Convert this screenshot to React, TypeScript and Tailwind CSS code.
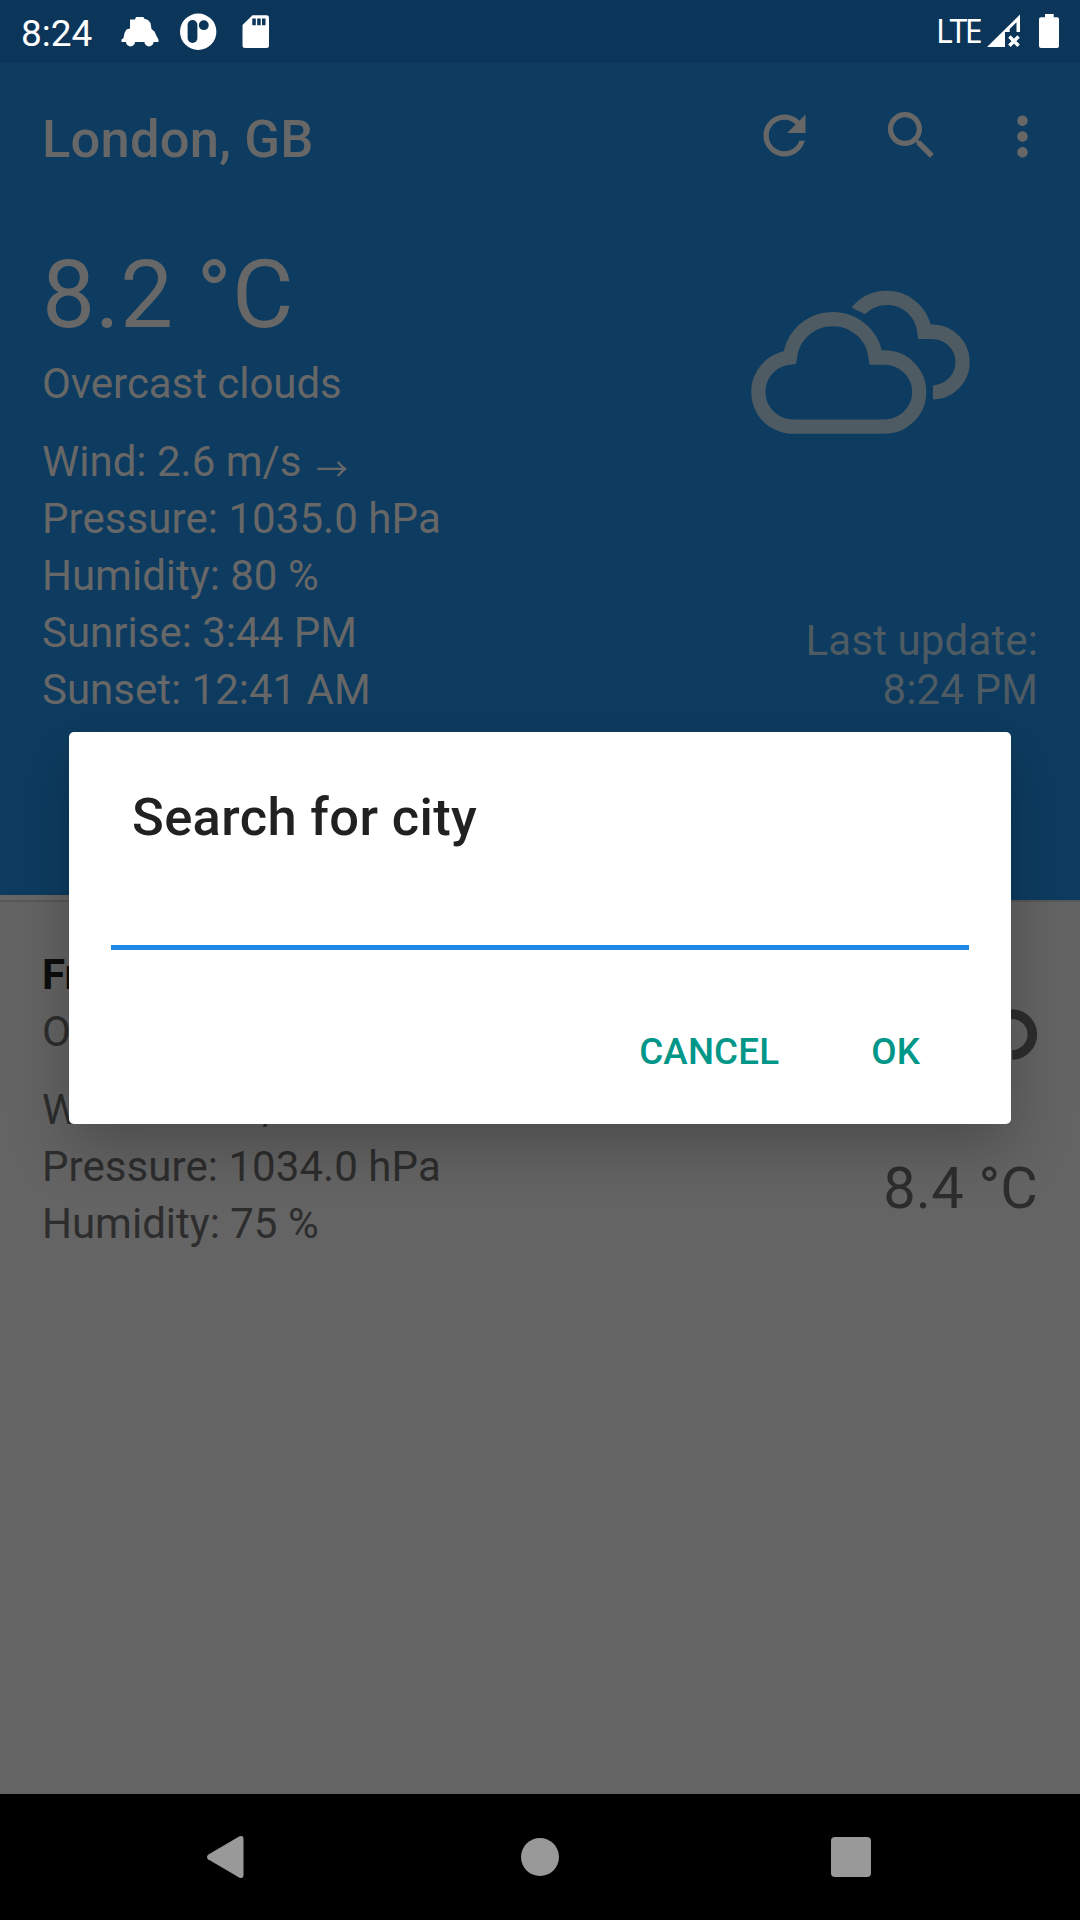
import { WiCloudy } from "react-icons/wi";

function StatusBar() {
  return (
    <div className="flex h-[63px] items-start justify-between bg-[#0c355a] text-white">
      <div className="flex">
        <span className="ml-[21px] mt-[12px] w-[100px] text-[37px] leading-[43px]">8:24</span>
        <svg width="40" height="32" viewBox="121 16 40 32" className="mt-4" fill="currentColor">
          <path d="M136 17L143.500 17L144 18.500L148 20L150.500 23L151.500 29L154.500 31.500L156.500 36L158.500 39.500L158.500 42L121.500 42L121.500 39.500L123.500 38L124.500 33L126.500 29.500L130 28.500L130 19.500L135 19.500Z" />
          <circle cx="130.5" cy="41.8" r="4.6" />
          <circle cx="149" cy="41.8" r="4.6" />
        </svg>
        <svg width="38" height="38" viewBox="179 13 38 38" className="ml-[18px] mt-[13px]">
          <circle cx="198.2" cy="31.7" r="18.2" fill="currentColor" />
          <rect x="187.6" y="20" width="9.8" height="23" rx="4.9" fill="#0c355a" />
          <circle cx="203.8" cy="25.2" r="4.9" fill="#0c355a" />
        </svg>
        <svg width="28" height="34" viewBox="242.5 15 28 34" className="ml-[25px] mt-[15px]">
          <path
            d="M253 15.3h14a2.5 2.5 0 0 1 2.5 2.5v27.700a2.500 2.500 0 0 1-2.500 2.500h-21.500a2.500 2.500 0 0 1-2.500-2.500V25z"
            fill="currentColor"
          />
          <path d="M252.800 18.500h3.500v6.800h-3.500zM257.700 18.500h3.500v6.800h-3.500zM262.500 18.500h3.500v6.800h-3.500z" fill="#0c355a" />
        </svg>
      </div>
      <div className="flex">
        <span className="mt-[12px] w-[51px] font-['Noto_Sans'] text-[32px] leading-[37px] tracking-[-2.6px]">LTE</span>
        <svg width="34" height="34" viewBox="987 14 34 34" className="mt-[14px]">
          <path d="M987 47L1020 14.500V32h-3.500V22.300L1009.700 29v3h-4.700v15z" fill="currentColor" />
          <path d="M1009.400 36.500l9.200 9.200M1018.600 36.500l-9.200 9.200" stroke="currentColor" strokeWidth="3.500" />
        </svg>
        <svg width="20" height="34" viewBox="1039 14 20 34" className="ml-[18px] mr-[21px] mt-[14px]" fill="currentColor">
          <path d="M1045 14h8.700v3.300h3.300a2 2 0 0 1 2 2V46a2 2 0 0 1-2 2h-16a2 2 0 0 1-2-2V19.300a2 2 0 0 1 2-2h4z" />
        </svg>
      </div>
    </div>
  );
}

function Toolbar() {
  return (
    <div className="flex h-[147px] justify-between">
      <h1 className="ml-[42px] mt-[45px] text-[52.5px] leading-[62px] font-medium tracking-[0.2px]">London, GB</h1>
      <div className="mt-[41px] flex">
        <svg width="63" height="63" viewBox="0 0 24 24" fill="currentColor">
          <path d="M17.65 6.35C16.2 4.9 14.21 4 12 4c-4.420 0-7.990 3.580-7.990 8s3.570 8 7.990 8c3.730 0 6.840-2.550 7.730-6h-2.080c-.82 2.330-3.040 4-5.650 4-3.310 0-6-2.690-6-6s2.690-6 6-6c1.660 0 3.140.69 4.220 1.780L13 11h7V4l-2.350 2.350z" />
        </svg>
        <svg width="63" height="63" viewBox="0 0 24 24" className="ml-[64px]" fill="currentColor">
          <path d="M15.5 14h-.79l-.28-.27C15.410 12.590 16 11.110 16 9.500 16 5.910 13.090 3 9.500 3S3 5.910 3 9.500 5.910 16 9.500 16c1.610 0 3.090-.59 4.230-1.570l.27.28v.79l5 4.990L20.490 19l-4.990-5zm-6 0C7.010 14 5 11.990 5 9.500S7.010 5 9.500 5 14 7.010 14 9.500 11.990 14 9.500 14z" />
        </svg>
        <svg width="63" height="63" viewBox="0 0 24 24" className="ml-[48px] mr-[26px] mt-px" fill="currentColor">
          <path d="M12 8c1.100 0 2-.9 2-2s-.9-2-2-2-2 .9-2 2 .9 2 2 2zm0 2c-1.100 0-2 .9-2 2s.9 2 2 2 2-.9 2-2-.9-2-2-2zm0 6c-1.100 0-2 .9-2 2s.9 2 2 2 2-.9 2-2-.9-2-2-2z" />
        </svg>
      </div>
    </div>
  );
}

function CurrentWeather() {
  return (
    <div className="flex h-[690px] justify-between">
      <div className="ml-[42px]">
        <div className="mt-[30px] text-[94.5px] leading-[110px]">8.2 °C</div>
        <div className="mt-[5px] text-[42px] leading-[57px] tracking-[-0.05px]">Overcast clouds</div>
        <div className="mt-[21px] text-[42px] leading-[57px]">
          <div>
            Wind: 2.6 m/s{" "}
            <span className="relative top-[5px] ml-[4px] font-['Noto_Sans_CJK_JP'] text-[32px] leading-none">→</span>
          </div>
          <div className="tracking-[0.06px]">Pressure: 1035.0 hPa</div>
          <div>Humidity: 80 %</div>
          <div>Sunrise: 3:44 PM</div>
          <div>Sunset: 12:41 AM</div>
        </div>
      </div>
      <div className="mr-[42px] flex flex-col items-end text-[#4e5b63]">
        <WiCloudy className="mr-[30px] mt-[9px] h-[295px] w-[295px]" />
        <div className="mt-[102px] text-right text-[42px] leading-[49px] tracking-[0.14px]">
          Last update:
          <br />
          8:24 PM
        </div>
      </div>
    </div>
  );
}

function ForecastRow() {
  return (
    <div className="flex h-[894px] justify-between border-t-2 border-[#585858] text-[42px] leading-[57px] text-[#2d2d2d]">
      <div className="ml-[42px] mt-[44px]">
        <div className="font-bold text-[#0d0d0d]">Friday</div>
        <div>Overcast clouds</div>
        <div className="mt-[21px]">Wind: 2.5 m/s</div>
        <div className="tracking-[0.06px]">Pressure: 1034.0 hPa</div>
        <div>Humidity: 75 %</div>
      </div>
      <div className="mr-[42px] flex flex-col items-end">
        <WiCloudy className="-mr-[25px] mt-[36px] h-[199px] w-[199px]" />
        <div className="mt-[17px] text-[57.750px] leading-[68px] tracking-[0.2px]">8.4 °C</div>
      </div>
    </div>
  );
}

function SearchDialog() {
  return (
    <div className="absolute left-[69px] top-[732px] flex h-[392px] w-[942px] flex-col rounded-[5px] bg-white shadow-[0_22px_60px_rgba(0,0,0,0.25)]">
      <h2 className="ml-[63px] mt-[54px] text-[52.5px] leading-[62px] font-medium tracking-[0.35px] text-[#212121]">Search for city</h2>
      <div className="mx-[42px] mt-[15px] h-[87px] border-b-[5px] border-[#1e88e5]" />
      <div className="mr-[91px] mt-[80px] flex justify-end gap-[92px] text-[36.750px] leading-[44px] font-medium tracking-[0.15px] text-[#009688]">
        <button>CANCEL</button>
        <button>OK</button>
      </div>
    </div>
  );
}

function NavBar() {
  return (
    <div className="flex h-[126px] items-center justify-between bg-black pl-[206px] pr-[209px] text-[#999999]">
      <svg width="38" height="44" viewBox="0 0 38 44" fill="currentColor">
        <path d="M2 19.700L33.500 1.300Q37.500 0 37.500 4V40Q37.500 44 33.500 42.700L2 24.300Q0 22 2 19.700Z" />
      </svg>
      <div className="ml-[5px] size-[38px] rounded-full bg-[#999999]" />
      <div className="size-[40px] rounded-[4px] bg-[#999999]" />
    </div>
  );
}

export default function App() {
  return (
    <div className="relative h-[1920px] w-[1080px] overflow-hidden bg-[#646464] font-['Roboto',sans-serif]">
      <StatusBar />
      <div className="relative bg-[#0d3c60] text-[#676767]">
        <Toolbar />
        <CurrentWeather />
        <div className="absolute bottom-0 left-0 h-[5px] w-[360px] bg-[#676767]" />
      </div>
      <ForecastRow />
      <NavBar />
      <SearchDialog />
    </div>
  );
}
